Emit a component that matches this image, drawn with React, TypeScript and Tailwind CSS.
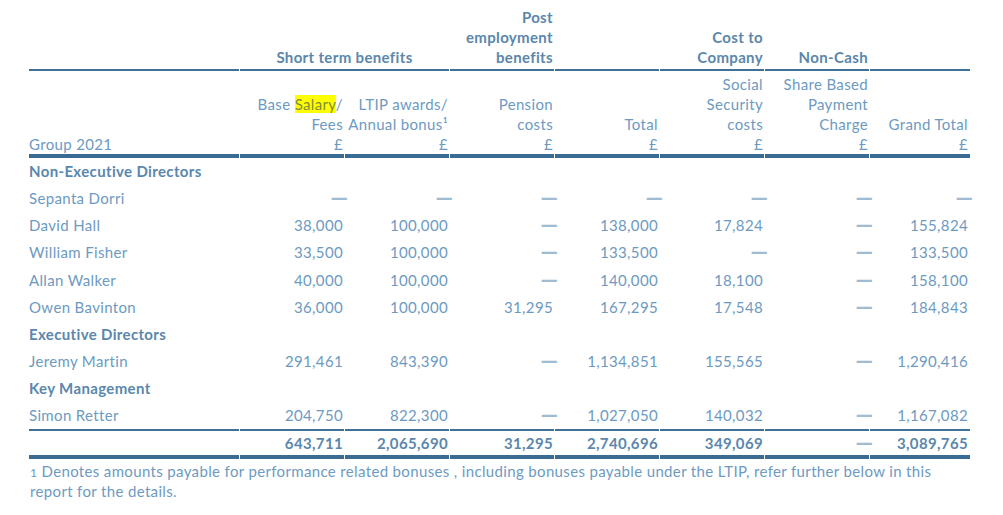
import React from "react";

type Row = {
  name: string;
  values: string[]; // 7 values, "-" for dash
  h: string;
};

type Section = { title: string; rows: Row[] };

const SECTIONS: Section[] = [
  {
    title: "Non-Executive Directors",
    rows: [
      { name: "Sepanta Dorri", values: ["-", "-", "-", "-", "-", "-", "-"], h: "h-[27px]" },
      { name: "David Hall", values: ["38,000", "100,000", "-", "138,000", "17,824", "-", "155,824"], h: "h-[27px]" },
      { name: "William Fisher", values: ["33,500", "100,000", "-", "133,500", "-", "-", "133,500"], h: "h-[27px]" },
      { name: "Allan Walker", values: ["40,000", "100,000", "-", "140,000", "18,100", "-", "158,100"], h: "h-[28px]" },
      { name: "Owen Bavinton", values: ["36,000", "100,000", "31,295", "167,295", "17,548", "-", "184,843"], h: "h-[27px]" },
    ],
  },
  {
    title: "Executive Directors",
    rows: [
      { name: "Jeremy Martin", values: ["291,461", "843,390", "-", "1,134,851", "155,565", "-", "1,290,416"], h: "h-[27px]" },
    ],
  },
  {
    title: "Key Management",
    rows: [
      { name: "Simon Retter", values: ["204,750", "822,300", "-", "1,027,050", "140,032", "-", "1,167,082"], h: "h-[29px]" },
    ],
  },
];

const TOTALS = ["643,711", "2,065,690", "31,295", "2,740,696", "349,069", "-", "3,089,765"];

function Cell({ v, bold }: { v: string; bold?: boolean }) {
  if (v === "-") {
    return (
      <span className="mr-[-5px] inline-block font-['DejaVu_Sans'] text-[17px] leading-none font-bold text-[#a0bcd3]">
        —
      </span>
    );
  }
  return <span className={bold ? "font-bold text-[#5b87ac]" : ""}>{v}</span>;
}

export default function App() {
  return (
    <div
      className="h-[515px] w-[1003px] overflow-hidden bg-white pl-[28px] pt-[7px] text-[15px] tracking-[0.35px] text-[#6d9ac1]"
      style={{ fontFamily: "Lato, 'Open Sans', sans-serif" }}
    >
      <table className="w-[943px] table-fixed border-separate border-spacing-x-px border-spacing-y-0">
        <colgroup>
          <col className="w-[210px]" />
          <col className="w-[104px]" />
          <col className="w-[104px]" />
          <col className="w-[104px]" />
          <col className="w-[104px]" />
          <col className="w-[104px]" />
          <col className="w-[104px]" />
          <col className="w-[100px]" />
        </colgroup>
        <thead className="leading-[20px]">
          {/* group headings */}
          <tr className="align-bottom font-bold text-[#5b87ac]">
            <th className="border-b-2 border-[#3f7098] pb-[2px]" />
            <th colSpan={2} className="border-b-2 border-[#3f7098] pb-[2px] text-center font-bold">
              Short term benefits
            </th>
            <th className="border-b-2 border-[#3f7098] pb-[2px] pr-px text-right font-bold">
              Post
              <br />
              employment
              <br />
              benefits
            </th>
            <th className="border-b-2 border-[#3f7098] pb-[2px]" />
            <th className="border-b-2 border-[#3f7098] pb-[2px] pr-px text-right font-bold">
              Cost to
              <br />
              Company
            </th>
            <th className="border-b-2 border-[#3f7098] pb-[2px] pr-px text-right font-bold">Non-Cash</th>
            <th className="border-b-2 border-[#3f7098] pb-[2px]" />
          </tr>
          {/* column headings */}
          <tr className="align-bottom">
            <th className="border-b-4 border-[#3a6b93] pt-[3px] text-left font-normal">Group 2021</th>
            <th className="border-b-4 border-[#3a6b93] pt-[3px] pr-px text-right font-normal">
              Base <span className="bg-[#ffff00] text-[#7f8e3a]">Salary</span>/
              <br />
              Fees
              <br />£
            </th>
            <th className="border-b-4 border-[#3a6b93] pt-[3px] pr-px text-right font-normal">
              LTIP awards/
              <br />
              Annual bonus¹
              <br />£
            </th>
            <th className="border-b-4 border-[#3a6b93] pt-[3px] pr-px text-right font-normal">
              Pension
              <br />
              costs
              <br />£
            </th>
            <th className="border-b-4 border-[#3a6b93] pt-[3px] pr-px text-right font-normal">
              Total
              <br />£
            </th>
            <th className="border-b-4 border-[#3a6b93] pt-[3px] pr-px text-right font-normal">
              Social
              <br />
              Security
              <br />
              costs
              <br />£
            </th>
            <th className="border-b-4 border-[#3a6b93] pt-[3px] pr-px text-right font-normal">
              Share Based
              <br />
              Payment
              <br />
              Charge
              <br />£
            </th>
            <th className="border-b-4 border-[#3a6b93] pt-[3px] pr-[2px] text-right font-normal">
              Grand Total
              <br />£
            </th>
          </tr>
        </thead>
        <tbody>
          {SECTIONS.map((s, si) => (
            <React.Fragment key={s.title}>
              <tr className="h-[27px]">
                <td colSpan={8} className="font-bold text-[#5b87ac]">
                  {s.title}
                </td>
              </tr>
              {s.rows.map((r, ri) => {
                const last = si === SECTIONS.length - 1 && ri === s.rows.length - 1;
                const border = last ? "border-b-2 border-[#3f7098]" : "";
                return (
                  <tr key={r.name} className={r.h}>
                    <td className={border}>{r.name}</td>
                    {r.values.map((v, i) => (
                      <td key={i} className={`text-right ${i === 6 ? "pr-[2px]" : "pr-px"} ${border}`}>
                        <Cell v={v} />
                      </td>
                    ))}
                  </tr>
                );
              })}
            </React.Fragment>
          ))}
          <tr className="h-[28px]">
            <td className="border-b-4 border-[#3a6b93]" />
            {TOTALS.map((v, i) => (
              <td
                key={i}
                className={`border-b-4 border-[#3a6b93] text-right ${i === 6 ? "pr-[2px]" : "pr-px"}`}
              >
                <Cell v={v} bold />
              </td>
            ))}
          </tr>
        </tbody>
      </table>
      <p className="mt-[2px] w-[935px] pl-[2px] leading-[20px]">
        <span className="text-[12px] leading-none">1</span> Denotes amounts payable for performance related
        bonuses , including bonuses payable under the LTIP, refer further below in this report for the details.
      </p>
    </div>
  );
}
